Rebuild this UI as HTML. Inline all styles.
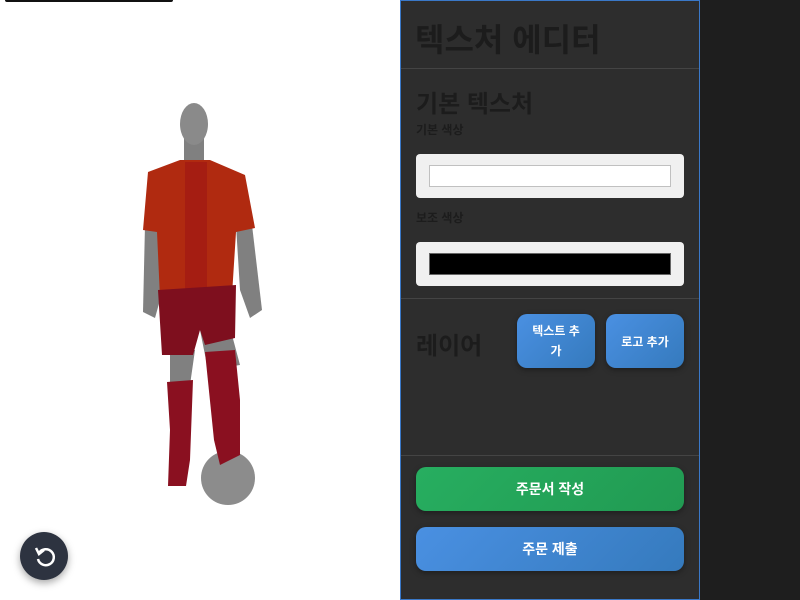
<!DOCTYPE html>
<html><head><meta charset="utf-8"><style>
*{margin:0;padding:0;box-sizing:border-box}
body{width:800px;height:600px;background:#fff;position:relative;overflow:hidden;font-family:"Liberation Sans","Noto Sans CJK KR",sans-serif}
.bar{position:absolute;left:5px;top:0;width:168px;height:2px;background:#111;border-radius:0 0 3px 3px}
.right{position:absolute;left:700px;top:0;width:100px;height:600px;background:#1e1e1e}
.panel{position:absolute;left:400px;top:0;width:300px;height:600px;background:#2d2d2d;border:1px solid #3a78c8}
.h1{position:absolute;left:14px;top:14px;font-size:32px;font-weight:bold;color:#1c1c1c}
.hr{position:absolute;left:0;width:298px;height:1px;background:#444}
.h2{position:absolute;left:15px;font-size:24px;font-weight:bold;color:#1c1c1c}
.lbl{position:absolute;left:15px;font-size:12px;font-weight:bold;color:#1c1c1c}
.cbox{position:absolute;left:15px;width:268px;height:44px;background:#f0f0f0;border-radius:4px}
.cbox div{position:absolute;left:13px;top:11px;width:242px;height:22px;border:1px solid #c0c0c0}
.btn{position:absolute;color:#fff;font-weight:bold;display:flex;align-items:center;justify-content:center;text-align:center;border-radius:10px;background:linear-gradient(135deg,#4a90e2,#357abd);box-shadow:0 2px 6px rgba(0,0,0,.35)}
.rot{position:absolute;left:20px;top:532px;width:48px;height:48px;border-radius:50%;background:#2d3340;box-shadow:0 3px 8px rgba(0,0,0,.35)}
</style></head><body>
<div class="bar"></div>
<svg style="position:absolute;left:0;top:0" width="400" height="600">
<g fill="#808080">
<rect x="184" y="138" width="20" height="25"/>
<polygon points="145,225 160,225 160,300 155,318 143,312"/>
<polygon points="236,225 252,225 262,310 250,318 240,290"/>
<polygon points="170,350 195,350 190,385 170,385"/>
<polygon points="200,330 232,335 240,365 208,370"/>
</g>
<ellipse cx="194" cy="124" rx="14" ry="21" fill="#8a8a8a"/>
<circle cx="228" cy="478" r="27" fill="#8c8c8c"/>
<polygon points="148,172 180,160 210,160 245,175 255,228 236,232 232,295 160,298 157,232 143,230" fill="#b02a10"/>
<rect x="185" y="162" width="22" height="130" fill="#a51d12"/>
<polygon points="158,290 236,285 235,338 205,345 200,330 193,355 162,355" fill="#7e0f1e"/>
<polygon points="167,382 193,380 190,460 186,486 168,486 170,430" fill="#8a1020"/>
<polygon points="205,352 235,350 240,400 240,455 220,465 214,440" fill="#8a1020"/>
</svg>
<div class="rot"><svg width="48" height="48" viewBox="0 0 48 48"><path d="M19 21 A8 8 0 1 1 18 27" stroke="#fff" stroke-width="2.5" fill="none"/><path d="M16 16 L19 22 L24 18" stroke="#fff" stroke-width="2.5" fill="none"/></svg></div>
<div class="panel">
<div class="h1">텍스처 에디터</div>
<div class="hr" style="top:67px"></div>
<div class="h2" style="top:83px">기본 텍스처</div>
<div class="lbl" style="top:120px">기본 색상</div>
<div class="cbox" style="top:153px"><div style="background:#fff"></div></div>
<div class="lbl" style="top:208px">보조 색상</div>
<div class="cbox" style="top:241px"><div style="background:#000;border-color:#666"></div></div>
<div class="hr" style="top:297px"></div>
<div class="h2" style="top:325px">레이어</div>
<div class="btn" style="left:116px;top:313px;width:78px;height:54px;font-size:12px;line-height:20px">텍스트 추<br>가</div>
<div class="btn" style="left:205px;top:313px;width:78px;height:54px;font-size:12px">로고 추가</div>
<div class="hr" style="top:454px"></div>
<div class="btn" style="left:15px;top:466px;width:268px;height:44px;font-size:14px;background:linear-gradient(135deg,#27ae60,#219a52)">주문서 작성</div>
<div class="btn" style="left:15px;top:526px;width:268px;height:44px;font-size:14px">주문 제출</div>
</div>
<div class="right"></div>
</body></html>
